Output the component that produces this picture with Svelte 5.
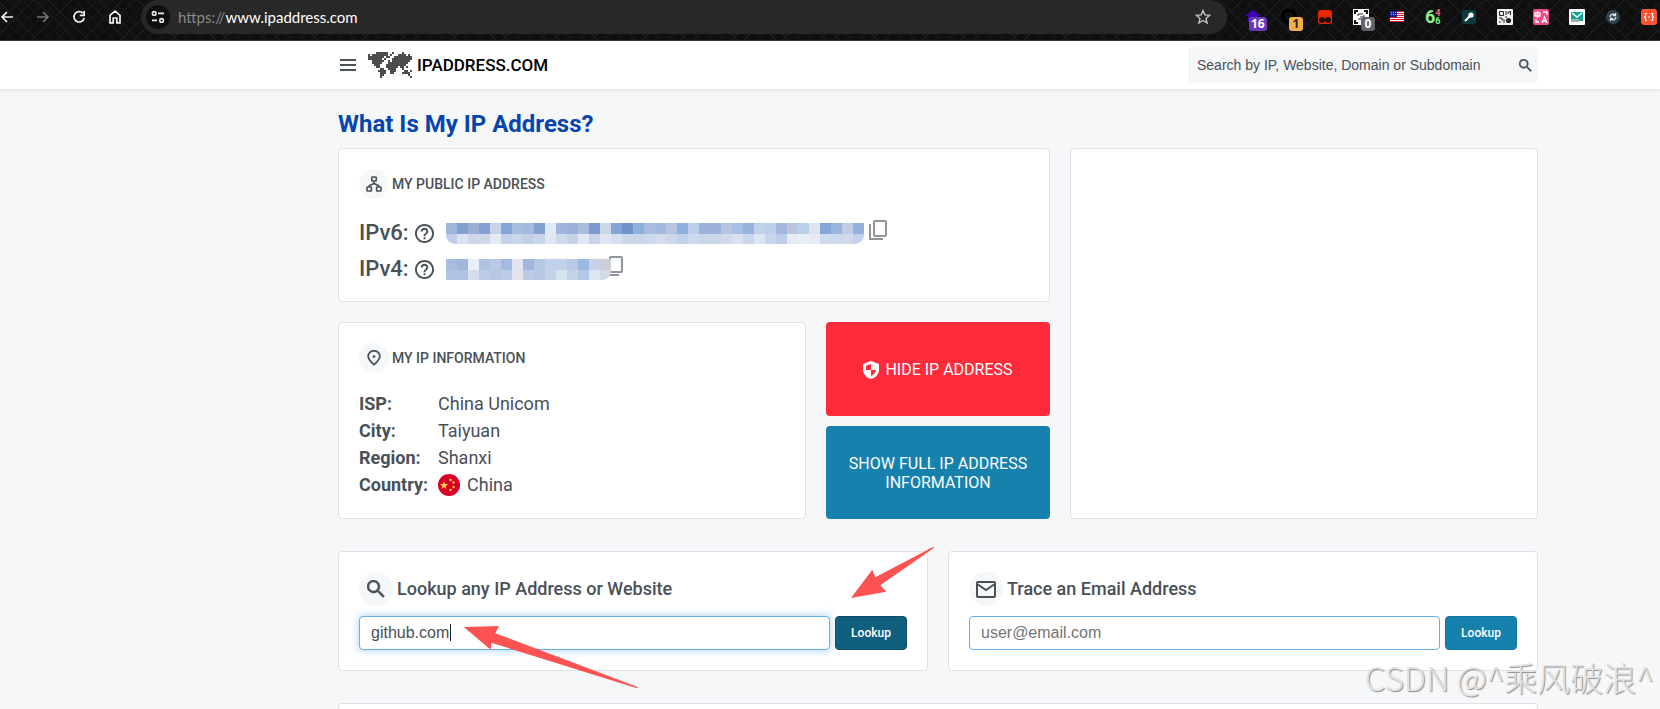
<script lang="ts">
  const world = [
    "....######..#....#....",
    "#.########.#...####.#.",
    "########.##..#########",
    "#######.#...##########",
    "..######..#.#########.",
    "..#####...##########..",
    "...###...##########...",
    "....##...######.##.#..",
    "......##..####...#....",
    ".....####..###....##.#",
    "......###..##....####.",
    "......##............#.",
    "......#..............#",
  ];

  const dots = world.flatMap((row, y) =>
    [...row].flatMap((c, x) => (c === "#" ? [{ x: x * 2 + 1, y: y * 2 + 1 }] : []))
  );

  // Obscured addresses: one colour per block, two rows each.
  const v6 = [
    "9fb5dc 84a0ce 9bafd6 84a1d2 c6d5e8 82a6d8 a6bfe0 a3bcdd 84a0cf e1e9f3 9fb5dd 9cb0d9 a9bddf 7a99cf ccd8ea 82a4d6 7391c9 8db0dd a9bcdf a5b8de b5c4e2 8bb0de becee8 9ab3dc 9bb2db b5c5e3 a6bfe4 98b2d9 c1d1e8 bccfe8 a6b8de bac6e0 b7d1e8 e0e4ef 84a5d8 9ab5dd c1cce6 93b3de",
    "bfcde9 dde2f0 ccd8ea cdd8ea e3eaf4 c3d2e9 c8d6ea c1cfe7 c9d5ea e1e7f2 ced9eb c5d3e8 dfe7f2 c8d4e9 dfe5f1 d4deed ccd7ea c9d7eb ccd8eb d4dcec cbd7ea c3d1e8 cddaed c8d6ec cbd8ea d0daec dbe1ef cad6eb dbe6f3 c8d6eb bccde9 e8ebf4 e6eef6 e7eaf3 cedbec ccd8eb d0daec c2d4ed",
  ].map((r) => r.split(" "));
  const v4 = [
    "a7bde0 a2b5dc e8eff8 b0c3e0 bac8e3 a3bbe2 e2e3ef a3b6de b5c8e4 c1d1e9 c2d0e8 b8cae6 9abadf c6d0e9 cccfd6",
    "b0c3e3 b0c2e3 d6deee bccbe6 b5c7e4 bccce6 e2e3ef bccae4 b9c6e3 c3d2e9 d2e6f0 c4d2e8 b4c7e7 dde5f2 d4d8e2",
  ].map((r) => r.split(" "));

  const info = [
    ["ISP", "China Unicom"],
    ["City", "Taiyuan"],
    ["Region", "Shanxi"],
    ["Country", "China"],
  ];

  let site = $state("github.com");
  let email = $state("");
  let query = $state("");
</script>

{#snippet magnifier()}
  <svg viewBox="3 3 18 18" fill="currentColor" stroke="currentColor" stroke-width=".5" aria-hidden="true">
    <path d="M15.5 14h-.79l-.28-.27A6.47 6.47 0 0 0 16 9.5 6.5 6.5 0 1 0 9.5 16c1.61 0 3.09-.59 4.23-1.57l.27.28v.79l5 4.99L20.49 19l-4.99-5zm-6 0C7.01 14 5 11.99 5 9.5S7.01 5 9.5 5 14 7.01 14 9.5 11.99 14 9.5 14z" />
  </svg>
{/snippet}

{#snippet help()}
  <svg class="help" viewBox="2 2 20 20" fill="currentColor" aria-hidden="true">
    <path d="M11 18h2v-2h-2v2zm1-16C6.48 2 2 6.48 2 12s4.48 10 10 10 10-4.48 10-10S17.52 2 12 2zm0 18c-4.41 0-8-3.59-8-8s3.59-8 8-8 8 3.59 8 8-3.59 8-8 8zm0-14c-2.21 0-4 1.79-4 4h2c0-1.1.9-2 2-2s2 .9 2 2c0 2-3 1.75-3 5h2c0-2.25 3-2.5 3-5 0-2.21-1.79-4-4-4z" />
  </svg>
{/snippet}

{#snippet blocks(rows: string[][])}
  <svg class="blocks" width={rows[0].length * 11} height="21" shape-rendering="crispEdges" aria-hidden="true">
    {#each rows as row, y}
      {#each row as c, x}
        <rect x={x * 11} y={y * 11} width="11" height="11" fill="#{c}" />
      {/each}
    {/each}
  </svg>
{/snippet}

{#snippet copy()}
  <button class="copy" aria-label="Copy address">
    <svg width="18" height="20" viewBox="0 0 18 20" fill="none" stroke="#8f959b" stroke-width="2">
      <rect x="5" y="1" width="12" height="15" rx="1" />
      <path d="M1 4v15h13" />
    </svg>
  </button>
{/snippet}

<div class="page">
  <div class="toolbar">
    <nav class="nav" aria-label="Browser">
      <button aria-label="Back">
        <svg viewBox="0 0 14 14"><path d="M13 7H2M7 2 2 7l5 5" /></svg>
      </button>
      <button class="dim" aria-label="Forward">
        <svg viewBox="0 0 14 14"><path d="M1 7h11M7 2l5 5-5 5" /></svg>
      </button>
      <button aria-label="Reload">
        <svg viewBox="0 0 14 14"><path d="M11 3.3A5.2 5.2 0 1 0 12.2 8M12.2 1v4.4H7.8" /></svg>
      </button>
      <button aria-label="Home">
        <svg viewBox="0 0 14 14"><path d="M2 5.4 7 1.2l5 4.2v7.4H8.8V8H5.2v4.8H2z" /></svg>
      </button>
    </nav>
    <div class="address">
      <button class="tune" aria-label="Site information">
        <svg width="14" height="14" viewBox="0 0 14 14" fill="none" stroke="#e8e8e8" stroke-width="1.6">
          <circle cx="3.2" cy="3.4" r="1.8" /><path d="M7 3.4h6M1 10.4h5" /><circle cx="10.6" cy="10.4" r="1.8" />
        </svg>
      </button>
      <span class="url"><span>https://</span>www.ipaddress.com</span>
      <button class="star" aria-label="Bookmark this page">
        <svg width="16" height="16" viewBox="0 0 16 16" fill="none" stroke="#c4c4c4" stroke-width="1.4">
          <path d="m8 1.6 1.9 4.3 4.7.4-3.6 3.1 1.1 4.6L8 11.5 3.9 14 5 9.4 1.4 6.3l4.7-.4z" />
        </svg>
      </button>
    </div>
    <div class="extensions">
      <span class="ext">
        <svg viewBox="0 0 16 16"><path d="M8 1 0 7h3v6h10V7h3z" fill="#4105b4" /></svg>
        <b class="badge purple">16</b>
      </span>
      <span class="ext">
        <svg viewBox="0 0 16 16"><circle cx="8" cy="7" r="6" fill="none" stroke="#000" stroke-width="4" /></svg>
        <b class="badge amber">1</b>
      </span>
      <span class="ext">
        <svg viewBox="0 0 16 16">
          <rect x="1" y="1" width="14" height="14" rx="3" fill="#e82600" />
          <circle cx="5" cy="11" r="3" fill="#210b06" /><circle cx="11" cy="11" r="3" fill="#210b06" />
        </svg>
      </span>
      <span class="ext">
        <svg viewBox="0 0 16 16">
          <path d="M0 0h16v16H0z" fill="#fff" />
          <path d="M2 5V2h3M11 2h3v3M2 11v3h3" stroke="#111" stroke-width="2" fill="none" />
          <path d="M5 7V5h5M7 8h4V6M5 10h3" stroke="#333" fill="none" />
        </svg>
        <b class="badge grey">0</b>
      </span>
      <span class="ext">
        <svg viewBox="0 0 16 16">
          <path d="M1 2h14v11H1z" fill="#fff" />
          <path d="M1 2.5h14M1 4.5h14M1 6.5h14M1 8.5h14M1 10.5h14M1 12.5h14" stroke="#d8142c" />
          <path d="M1 2h7v6H1z" fill="#1a1f9c" />
          <path d="M2 3.5h6M2 5.5h6" stroke="#aab" stroke-dasharray="1 1" />
        </svg>
      </span>
      <span class="ext six">6<i><span>4</span><span>6</span></i></span>
      <span class="ext">
        <svg viewBox="0 0 16 16">
          <rect x="1" y="1" width="14" height="14" rx="2" fill="#0c3c3f" />
          <path d="m4 12 5-5" stroke="#fff" stroke-width="2" /><circle cx="10" cy="6" r="2.6" fill="#fff" />
        </svg>
      </span>
      <span class="ext">
        <svg viewBox="0 0 16 16">
          <rect width="16" height="16" rx="1" fill="#f2f2f2" />
          <path d="M2.5 2.5h4v4h-4zM9 2v4M12 2v2h-2M13.5 2v4M2 9h3v2h3M2 13h2M6 13h2M8 8h2" stroke="#222" fill="none" />
          <circle cx="11.5" cy="11.5" r="2.6" fill="#222" />
        </svg>
      </span>
      <span class="ext">
        <svg viewBox="0 0 16 16">
          <rect width="16" height="16" rx="2" fill="#ec4a8a" />
          <path d="M2 4h5v3H2zM4.5 2v7M10 3h4v3M9 14l2.500-6 2.500 6M10 12h3M3 10v3h3" stroke="#fff" stroke-width="1.3" fill="none" />
        </svg>
      </span>
      <span class="ext">
        <svg viewBox="0 0 16 16">
          <rect width="16" height="16" rx="1" fill="#fff" /><path d="M2 3h12v9H2z" fill="#12a594" />
          <path d="m3 4 5 4 5-4" stroke="#fff" stroke-width="1.4" fill="none" /><path d="M2 10h8v3H2z" fill="#98b4b5" />
        </svg>
      </span>
      <span class="ext">
        <svg viewBox="0 0 16 16">
          <circle cx="8" cy="8" r="7" fill="#33444f" />
          <path d="M5 8A3 3 0 0 1 10 6M11 8A3 3 0 0 1 6 10M10.500 4v2.500H8M5.500 12V9.500H8" stroke="#d5e4ee" stroke-width="1.3" fill="none" />
        </svg>
      </span>
      <span class="ext">
        <svg viewBox="0 0 16 16">
          <rect width="16" height="16" rx="3" fill="#ff5530" />
          <path d="M6 4.5H4.5V7l-1 1 1 1v2.5H6M10 4.5h1.5V7l1 1-1 1v2.5H10M7 8h2" stroke="#fff" stroke-width="1.2" fill="none" />
        </svg>
      </span>
    </div>
  </div>

  <header class="header">
    <button class="menu" aria-label="Menu"><span></span><span></span><span></span></button>
    <a class="logo" href="/">
      <svg width="44" height="26" viewBox="0 0 44 26" aria-hidden="true">
        {#each dots as d}
          <circle cx={d.x} cy={d.y} r=".95" fill="#000" />
        {/each}
      </svg>
      IPADDRESS.COM
    </a>
    <form class="search">
      <input bind:value={query} aria-label="Search" placeholder="Search by IP, Website, Domain or Subdomain" />
      <button type="button" aria-label="Search">{@render magnifier()}</button>
    </form>
  </header>

  <main>
    <h1>What Is My IP Address?</h1>

    <div class="top">
      <section class="card public">
        <h2>
          <span class="round">
            <svg width="16" height="16" viewBox="0 0 16 16" fill="none" stroke="currentColor" stroke-width="1.6">
              <rect x="5.8" y="1" width="4.4" height="4" rx=".6" /><rect x="1" y="11" width="4.4" height="4" rx=".6" />
              <rect x="10.6" y="11" width="4.4" height="4" rx=".6" /><path d="M8 5v3M3.2 11V9.800L8 7.500l4.800 2.300V11" />
            </svg>
          </span>
          MY PUBLIC IP ADDRESS
        </h2>
        <div class="ips">
          <div class="ip"><span>IPv6:</span>{@render help()}{@render blocks(v6)}{@render copy()}</div>
          <div class="ip v4"><span>IPv4:</span>{@render help()}{@render blocks(v4)}{@render copy()}</div>
        </div>
      </section>

      <section class="card info">
        <h2>
          <span class="round">
            <svg width="14" height="16" viewBox="0 0 14 16" fill="none" stroke="currentColor" stroke-width="1.8">
              <path d="M7 14.6C3.6 11.6 1.2 9 1.2 6.4A5.7 5.5 0 0 1 12.8 6.4C12.8 9 10.4 11.6 7 14.6z" />
              <circle cx="7" cy="6.6" r="1.4" fill="currentColor" stroke="none" />
            </svg>
          </span>
          MY IP INFORMATION
        </h2>
        <dl>
          {#each info as [label, value]}
            <dt>{label}:</dt>
            <dd>
              {#if label === "Country"}
                <svg width="22" height="22" viewBox="0 0 22 22" aria-hidden="true">
                  <circle cx="11" cy="11" r="11" fill="#d80027" />
                  <g fill="#ffda44">
                    <path d="m6 7 1 3h3.200l-2.600 1.900 1 3L6 13.100l-2.600 1.800 1-3L1.800 10H5z" />
                    <circle cx="12.5" cy="6" r="1.2" /><circle cx="15.5" cy="8.5" r="1.2" />
                    <circle cx="15.5" cy="13" r="1.2" /><circle cx="12.5" cy="16" r="1.2" />
                  </g>
                </svg>
              {/if}
              {value}
            </dd>
          {/each}
        </dl>
      </section>

      <div class="actions">
        <button class="hide">
          <svg width="16" height="18" viewBox="0 0 16 18" aria-hidden="true">
            <path d="M8 0 0 3v5.500c0 4.500 3.300 8.500 8 9.500 4.700-1 8-5 8-9.500V3z" fill="#fff" />
            <path d="M8 3v6H3V4.800zM8 9h5c-.4 2.700-2.500 5.200-5 6z" fill="#ff2a3a" />
          </svg>
          HIDE IP ADDRESS
        </button>
        <button class="show">SHOW FULL IP ADDRESS INFORMATION</button>
      </div>

      <section class="card side"></section>
    </div>

    <div class="tools">
      <section class="card lookup">
        <h3><span class="round">{@render magnifier()}</span>Lookup any IP Address or Website</h3>
        <form>
          <div class="field active">
            <input bind:value={site} aria-label="IP address or website" />
            <span class="caret"></span>
          </div>
          <button type="button" class="pressed">Lookup</button>
        </form>
        <svg class="arrow to-field" width="175" height="63" viewBox="0 0 175 63" aria-hidden="true">
          <path d="M.7 1 36 0l-3.700 7.300L174.700 61l-.7 1.200L28.300 16.700l-.6 7z" />
        </svg>
        <svg class="arrow to-button" width="83" height="52" viewBox="0 0 83 52" aria-hidden="true">
          <path d="M0 52 21.300 23.700l3 7.600L82.500.7l.3 1.300L29.300 39.300l6 6.400z" />
        </svg>
      </section>

      <section class="card trace">
        <h3>
          <span class="round">
            <svg class="mail" width="20" height="17" viewBox="0 0 20 17" fill="none" stroke="currentColor" stroke-width="2">
              <rect x="1" y="1" width="18" height="15" rx="1" /><path d="m2 3.500 8 5.500 8-5.500" />
            </svg>
          </span>
          Trace an Email Address
        </h3>
        <form>
          <div class="field"><input bind:value={email} type="email" aria-label="Email address" placeholder="user@email.com" /></div>
          <button type="button">Lookup</button>
        </form>
      </section>
    </div>

    <section class="card more"></section>
  </main>

  <div class="watermark">CSDN @^乘风破浪^</div>
</div>

<style>
  :global(body) {
    background: #f5f7f9;
  }
  .page,
  .page :global(*) {
    box-sizing: border-box;
  }
  .page {
    position: relative;
    display: flex;
    flex-direction: column;
    min-height: 100vh;
    overflow: hidden;
    font-family: Roboto, sans-serif;
    color: #495057;
  }
  button {
    padding: 0;
    border: 0;
    background: none;
    color: inherit;
    font: inherit;
    cursor: pointer;
  }
  svg {
    display: block;
    flex: none;
  }

  .toolbar {
    display: flex;
    align-items: flex-start;
    height: 41px;
    padding-right: 3px;
    border-bottom: 1px solid #3a3a3a;
    background:
      repeating-linear-gradient(45deg, transparent 0 8px, #1a1a1a 8px 9px),
      repeating-linear-gradient(-45deg, transparent 0 8px, #1a1a1a 8px 9px),
      #0f0f0f;
  }
  .nav {
    display: flex;
    gap: 22px;
    margin: 10px 19px 0 0;
    color: #f1f1f1;
  }
  .nav svg {
    width: 14px;
    height: 14px;
    fill: none;
    stroke: currentColor;
    stroke-width: 1.7;
  }
  .nav .dim {
    color: #777;
  }
  .address {
    display: flex;
    flex: 1;
    align-items: center;
    height: 34px;
    padding: 0 16px 0 5px;
    border-radius: 17px;
    background: #282828;
  }
  .tune {
    display: grid;
    place-items: center;
    width: 24px;
    height: 24px;
    border-radius: 50%;
    background: #0f0f0f;
  }
  .url {
    flex: 1;
    margin-left: 8px;
    color: #fff;
    font: 15px/18px Lato, sans-serif;
  }
  .url span {
    color: #8a8a8a;
  }
  .extensions {
    display: flex;
    gap: 20px;
    margin: 9px 0 0 18px;
  }
  .ext {
    position: relative;
    width: 16px;
    height: 16px;
  }
  .badge {
    position: absolute;
    top: 8px;
    left: 4px;
    min-width: 14px;
    padding: 0 2px;
    border-radius: 3px;
    color: #fff;
    font: bold 12px/14px "Open Sans", sans-serif;
    text-align: center;
  }
  .badge.purple {
    background: #6a38bd;
  }
  .badge.amber {
    left: 8px;
    background: #f0ad4e;
    color: #33260f;
  }
  .badge.grey {
    left: 8px;
    background: #5f6368;
  }
  .six {
    display: flex;
    color: #86f58a;
    font: bold 18px/16px Roboto, sans-serif;
  }
  .six i {
    font: bold 9px/8px Roboto, sans-serif;
  }
  .six i span {
    display: block;
  }
  .six i span:first-child {
    color: #f07070;
  }

  .header {
    display: flex;
    align-items: center;
    height: 48px;
    padding: 0 122px 0 338px;
    background: #fff;
    box-shadow: 0 1px 4px rgb(0 0 0 / 12%);
  }
  .menu {
    display: grid;
    gap: 3px;
    width: 18px;
    padding-left: 2px;
  }
  .menu span {
    height: 2px;
    background: #49545b;
  }
  .logo {
    display: flex;
    flex: 1;
    align-items: center;
    gap: 5px;
    margin-left: 12px;
    color: #000;
    font-size: 17px;
    font-weight: 500;
    text-decoration: none;
  }
  .search {
    display: flex;
    align-items: center;
    width: 350px;
    height: 36px;
    padding: 0 6px 0 9px;
    border-radius: 4px;
    background: #f4f6f8;
  }
  .search input {
    flex: 1;
    padding: 0;
    border: 0;
    outline: 0;
    background: none;
    color: #495057;
    font: 14px "Liberation Sans", Arial, sans-serif;
  }
  .search input::placeholder {
    color: #495057;
  }
  .search svg {
    width: 13px;
    height: 13px;
  }

  main {
    display: flex;
    flex: 1;
    flex-direction: column;
    padding: 21px 122px 0 338px;
  }
  h1 {
    margin: 0 0 10px;
    color: #0645ad;
    font-size: 24px;
    font-weight: 700;
    line-height: 28px;
  }
  .card {
    padding: 20px;
    border: 1px solid #dee2e6;
    border-radius: 4px;
    background: #fff;
  }
  .top {
    display: grid;
    grid-template-columns: 468fr 224fr 468fr;
    gap: 20px;
  }
  .public {
    grid-column: span 2;
    padding-bottom: 19px;
  }
  .side {
    grid-area: 1 / 3 / 3 / 4;
  }
  h2 {
    display: flex;
    align-items: center;
    gap: 3px;
    height: 30px;
    margin: 0;
    font-size: 14px;
    font-weight: 500;
  }
  .round {
    display: grid;
    flex: none;
    place-items: center;
    width: 30px;
    height: 30px;
    border-radius: 50%;
    background: #f5f7f9;
  }
  .ips {
    display: grid;
    gap: 10px;
    margin-top: 21px;
  }
  .ip {
    display: flex;
    align-items: center;
    height: 26px;
    font-size: 22px;
    font-weight: 500;
    line-height: 26px;
  }
  .ip span {
    width: 56px;
  }
  .help {
    width: 19px;
    height: 19px;
  }
  .blocks {
    margin-left: 12px;
    border-radius: 0 0 9px 9px;
  }
  .copy {
    align-self: flex-start;
    margin-left: 5px;
  }
  .v4 .blocks {
    position: relative;
    z-index: 1;
    border-radius: 0 0 9px 0;
  }
  .v4 .copy {
    margin-left: -6px;
  }

  dl {
    display: grid;
    grid-template-columns: 79px 1fr;
    margin: 17px 0 0;
    font-size: 18px;
    line-height: 27px;
  }
  dt {
    font-weight: 700;
  }
  dd {
    display: flex;
    align-items: center;
    gap: 7px;
    margin: 0;
  }
  .actions {
    display: flex;
    flex-direction: column;
    gap: 10px;
  }
  .actions button {
    display: flex;
    flex: 1;
    align-items: center;
    justify-content: center;
    gap: 6px;
    padding: 2px 20px 0;
    border-radius: 4px;
    color: #fff;
    font-size: 16px;
    line-height: 19px;
  }
  .actions .hide {
    background: #ff2a3a;
  }
  .actions .show {
    background: #1681ac;
  }

  .tools {
    display: grid;
    grid-template-columns: 1fr 1fr;
    gap: 20px;
    margin: 32px 0;
  }
  .lookup {
    position: relative;
  }
  h3 {
    display: flex;
    align-items: center;
    gap: 4px;
    height: 34px;
    margin: 0 0 10px;
    font-size: 18px;
    font-weight: 500;
    line-height: 20px;
  }
  h3 .round {
    width: 34px;
    height: 34px;
  }
  h3 .round svg:not(.mail) {
    width: 18px;
    height: 18px;
  }
  form {
    display: flex;
    gap: 5px;
  }
  .field {
    position: relative;
    flex: 1;
  }
  .field input {
    width: 100%;
    height: 34px;
    padding: 0 11px;
    border: 1px solid #66afe9;
    border-radius: 4px;
    outline: 0;
    background: #fff;
    color: #495057;
    font: 16px "Liberation Sans", Arial, sans-serif;
  }
  .field input::placeholder {
    color: #757575;
  }
  .field.active input {
    box-shadow: 0 0 8px rgb(102 175 233 / 60%);
  }
  .caret {
    position: absolute;
    top: 8px;
    left: 91px;
    width: 1px;
    height: 17px;
    background: #222;
  }
  .tools form button {
    width: 72px;
    border: 1px solid #13739a;
    border-radius: 4px;
    background: #1681ac;
    color: #fff;
    font-size: 12px;
    font-weight: 500;
  }
  .tools form .pressed {
    border-color: #0c4a63;
    background: #105f7f;
  }
  .arrow {
    position: absolute;
    fill: #fc5252;
  }
  .to-field {
    top: 74px;
    left: 124px;
  }
  .to-button {
    top: -6px;
    right: -7px;
  }
  .more {
    flex: 1;
    padding: 0;
    border-bottom: 0;
    border-radius: 4px 4px 0 0;
  }
  .watermark {
    position: absolute;
    right: 6px;
    bottom: 10px;
    color: #e2e3e5;
    font: 300 33px/44px "Noto Sans CJK SC", sans-serif;
    text-shadow: 1px 1px 1px #8c8c8c;
    white-space: nowrap;
  }
</style>
